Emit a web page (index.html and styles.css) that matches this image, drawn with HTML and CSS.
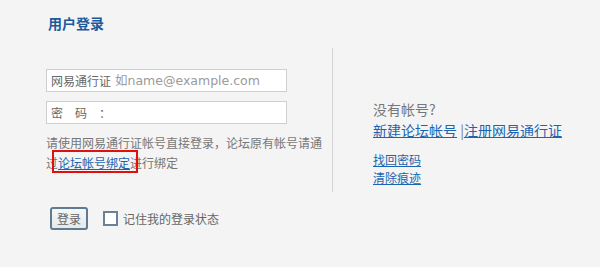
FILE: index.html
```html
<!DOCTYPE html>
<html lang="zh-CN">
<head>
<meta charset="utf-8">
<title>用户登录</title>
<link rel="stylesheet" href="styles.css">
</head>
<body>
<div class="wrap">
  <h1 class="title">用户登录</h1>
  <div class="main">
    <div class="left">
      <label class="field">
        <span class="field-label">网易通行证</span>
        <input class="field-input" type="text" placeholder="如name@example.com">
      </label>
      <label class="field">
        <span class="field-label">密　码　：</span>
        <input class="field-input" type="password">
      </label>
      <p class="note">请使用网易通行证帐号直接登录，论坛原有帐号请通过<a class="link boxed" href="#">论坛帐号绑定</a>进行绑定</p>
    </div>
    <div class="right">
      <p class="ask">没有帐号?</p>
      <p class="reg"><a class="link" href="#">新建论坛帐号</a> |<a class="link" href="#">注册网易通行证</a></p>
      <ul class="extra">
        <li><a class="link" href="#">找回密码</a></li>
        <li><a class="link" href="#">清除痕迹</a></li>
      </ul>
    </div>
  </div>
  <div class="actions">
    <button class="btn" type="button">登录</button>
    <label class="remember"><span class="check"></span>记住我的登录状态</label>
  </div>
</div>
</body>
</html>
```
FILE: styles.css
```css
html, body {
  margin: 0;
  padding: 0;
  background: #f4f4f4;
}
body {
  font-family: "Noto Sans CJK SC", "DejaVu Sans", sans-serif;
  font-size: 12px;
  color: #666;
}
.wrap {
  padding: 13px 0 0 46px;
}
.title {
  margin: 0;
  font-size: 14px;
  line-height: 20px;
  font-weight: bold;
  color: #1b5b9b;
  padding-left: 2px;
}
.main {
  display: flex;
  margin-top: 15px;
}
.left {
  width: 280px;
  padding-top: 21px;
}
.field {
  display: flex;
  align-items: center;
  width: 235px;
  height: 21px;
  border: 1px solid #cfcfcf;
  background: #fff;
  margin-bottom: 9px;
  padding-left: 4px;
}
.field-label {
  font-size: 12px;
  color: #666;
  white-space: nowrap;
  line-height: 21px;
}
.field-input {
  flex: 1;
  min-width: 0;
  border: 0;
  outline: 0;
  background: transparent;
  padding: 0 0 0 4px;
  font-family: "DejaVu Sans", "Noto Sans CJK SC", sans-serif;
  font-size: 12.5px;
  color: #333;
  height: 21px;
}
.field-input::placeholder {
  color: #9a9a9a;
}
.note {
  margin: 0;
  line-height: 20px;
  color: #777;
}
.link {
  color: #1c64b0;
  text-decoration: underline;
}
.boxed {
  position: relative;
}
.boxed::after {
  content: "";
  position: absolute;
  left: -6px;
  right: -8px;
  top: -4px;
  bottom: -2px;
  border: 2px solid #e01010;
}
.right {
  margin-left: 6px;
  border-left: 1px solid #d4d4d4;
  height: 144px;
  padding: 51px 0 0 40px;
  box-sizing: border-box;
}
.ask {
  margin: 0;
  font-size: 14px;
  line-height: 21px;
  color: #777;
}
.reg {
  margin: 0;
  font-size: 14px;
  line-height: 21px;
  color: #777;
}
.extra {
  list-style: none;
  margin: 10px 0 0;
  padding: 0;
  line-height: 18px;
}
.actions {
  display: flex;
  align-items: center;
  margin-top: 15px;
  padding-left: 4px;
}
.btn {
  width: 38px;
  height: 23px;
  border: 2px solid #5e7b92;
  border-radius: 3px;
  background: linear-gradient(#f7f7f7, #e6e8ea);
  font-family: "Noto Sans CJK SC", sans-serif;
  font-size: 12px;
  color: #666;
  padding: 0;
  line-height: 19px;
}
.remember {
  display: flex;
  align-items: center;
  margin-left: 15px;
  color: #666;
}
.check {
  width: 11px;
  height: 11px;
  border: 2px solid #6c8196;
  background: #fff;
  margin-right: 5px;
}
```
